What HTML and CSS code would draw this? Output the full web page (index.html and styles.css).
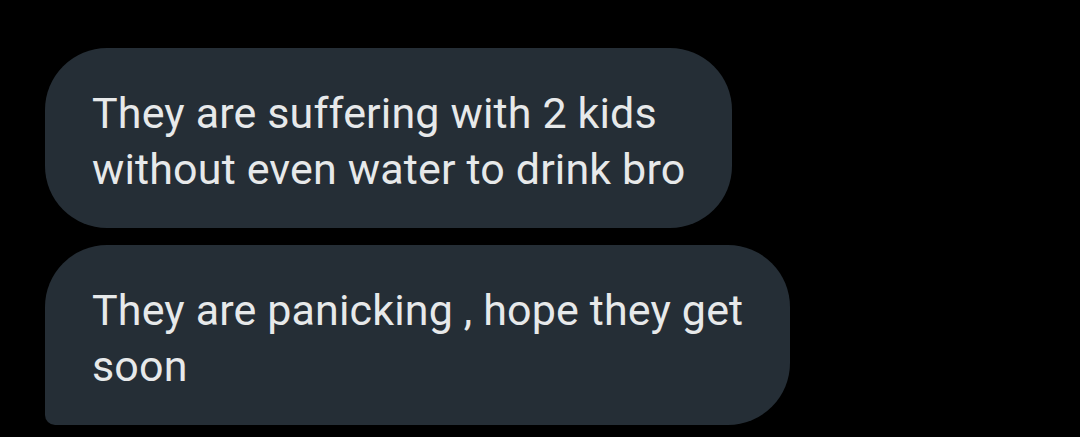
FILE: index.html
```html
<!DOCTYPE html>
<html>
<head>
<meta charset="utf-8">
<link rel="stylesheet" href="styles.css">
</head>
<body>
<div class="thread">
  <div class="bubble">They are suffering with 2 kids<br>without even water to drink bro</div>
  <div class="bubble last">They are panicking , hope they get<br>soon</div>
</div>
</body>
</html>
```
FILE: styles.css
```css
html, body {
  margin: 0;
  padding: 0;
  background: #000;
  height: 100%;
  overflow: hidden;
}
.thread {
  display: flex;
  flex-direction: column;
  align-items: flex-start;
  gap: 17px;
  padding: 48px 0 0 45px;
}
.bubble {
  box-sizing: border-box;
  padding: 37px 47px 31px 47px;
  background: #252e36;
  color: #e7e9ea;
  font-family: Roboto, "Liberation Sans", sans-serif;
  font-size: 43px;
  letter-spacing: 0.15px;
  line-height: 56px;
  white-space: nowrap;
  border-radius: 62px;
}
.bubble.last {
  border-bottom-left-radius: 10px;
}
```
